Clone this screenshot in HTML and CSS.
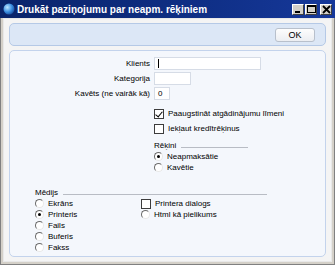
FILE: index.html
```html
<!DOCTYPE html>
<html>
<head>
<meta charset="utf-8">
<link rel="stylesheet" href="styles.css">
</head>
<body>
<div class="window">
  <div class="titlebar">
    <svg class="appicon" width="12" height="12" viewBox="0 0 12 12">
      <defs><radialGradient id="g" cx="0.35" cy="0.35" r="0.7"><stop offset="0" stop-color="#bfe6ff"/><stop offset="0.6" stop-color="#3a8ee0"/><stop offset="1" stop-color="#1a4fa0"/></radialGradient></defs>
      <circle cx="6" cy="6" r="5.5" fill="url(#g)"/>
    </svg>
    <span class="title">Drukāt paziņojumu par neapm. rēķiniem</span>
    <div class="tbtns">
      <span class="tbtn"><svg width="9" height="9" viewBox="0 0 9 9"><rect x="1" y="6" width="5" height="2" fill="#000"/></svg></span>
      <span class="tbtn"><svg width="9" height="9" viewBox="0 0 9 9"><rect x="0.5" y="0.5" width="8" height="7" fill="none" stroke="#000"/><rect x="0" y="0" width="9" height="2" fill="#000"/></svg></span>
      <span class="tbtn close"><svg width="9" height="9" viewBox="0 0 9 9"><path d="M1 1 L8 8 M8 1 L1 8" stroke="#000" stroke-width="1.8"/></svg></span>
    </div>
  </div>
  <div class="body">
    <div class="toolbar">
      <button class="okbtn">OK</button>
    </div>
    <div class="panel">
      <div class="fields">
        <label class="lbl">Klients</label><div class="inp w-long"><span class="caret"></span></div>
        <label class="lbl">Kategorija</label><div class="inp w-mid"></div>
        <label class="lbl">Kavēts (ne vairāk kā)</label><div class="inp w-short">0</div>
      </div>
      <div class="checks">
        <div class="opt"><span class="cb checked"></span>Paaugstināt atgādinājumu līmeni</div>
        <div class="opt"><span class="cb"></span>Iekļaut kredītrēķinus</div>
      </div>
      <div class="group rekini">
        <div class="ghead"><span>Rēķini</span><span class="gline"></span></div>
        <div class="opt"><span class="rb on"></span>Neapmaksātie</div>
        <div class="opt"><span class="rb"></span>Kavētie</div>
      </div>
      <div class="group medijs">
        <div class="ghead"><span>Mēdijs</span><span class="gline"></span></div>
        <div class="cols">
          <div class="col">
            <div class="opt"><span class="rb"></span>Ekrāns</div>
            <div class="opt"><span class="rb on"></span>Printeris</div>
            <div class="opt"><span class="rb"></span>Fails</div>
            <div class="opt"><span class="rb"></span>Buferis</div>
            <div class="opt"><span class="rb"></span>Fakss</div>
          </div>
          <div class="col">
            <div class="opt"><span class="cb"></span>Printera dialogs</div>
            <div class="opt"><span class="rb"></span>Html kā pielikums</div>
          </div>
        </div>
      </div>
    </div>
  </div>
</div>
</body>
</html>
```
FILE: styles.css
```css
* { box-sizing: border-box; }
html, body { margin: 0; padding: 0; }
body { width: 335px; height: 265px; overflow: hidden; font-family: "Liberation Sans", Arial, sans-serif; font-size: 8px; color: #000; background: #fff; }
.window { width: 335px; height: 265px; display: flex; flex-direction: column; background: #d4d0c8; border: 1px solid #808080; border-top: none; }
.titlebar { height: 18px; flex: none; display: flex; align-items: center; padding: 0 3px 0 3px; background: linear-gradient(to right, #0a246a, #0f2f86 60%, #16389a); color: #fff; margin: 0 -1px; }
.appicon { flex: none; margin-right: 2px; }
.title { font-weight: bold; font-size: 10px; flex: 1; white-space: nowrap; letter-spacing: 0; }
.tbtns { display: flex; gap: 1px; }
.tbtn { width: 12px; height: 11px; background: #d4d0c8; border: 1px solid; border-color: #fff #404040 #404040 #fff; display: flex; align-items: center; justify-content: center; }
.tbtn.close { margin-left: 2px; }
.body { flex: 1; margin: 0 2px 2px 2px; background: #f4f4f4; padding: 4px 5px 4px 5px; display: flex; flex-direction: column; gap: 4px; border: 1px solid #e8e8e8; }
.toolbar { height: 23px; flex: none; border: 1px solid #b5c9e6; border-radius: 5px; background: #dce7f6; display: flex; align-items: center; justify-content: flex-end; padding-right: 10px; }
.okbtn { width: 40px; height: 14px; padding: 0; font: 9px "Liberation Sans", Arial, sans-serif; color: #000; background: linear-gradient(#fdfdfd, #eceef2); border: 1px solid #b8c0cc; border-radius: 3px; }
.panel { flex: 1; border: 1px solid #c3d3ec; border-radius: 5px; background-color: #f4f7fc; background-image: radial-gradient(#e6ecf7 0.6px, transparent 0.7px); background-size: 2px 2px; padding: 6px 0 0 0; }
.fields { display: grid; grid-template-columns: 140px auto; column-gap: 4px; row-gap: 2px; align-items: center; justify-items: start; }
.lbl { justify-self: end; line-height: 12px; }
.inp { height: 13px; background: #fff; border: 1px solid #d6dce6; line-height: 11px; padding-left: 3px; }
.w-long { width: 107px; }
.w-mid { width: 37px; }
.w-short { width: 16px; }
.caret { display: inline-block; width: 1px; height: 9px; background: #000; margin-top: 1px; }
.checks { margin: 8px 0 0 144px; display: flex; flex-direction: column; gap: 4px; }
.opt { display: flex; align-items: center; height: 11px; white-space: nowrap; }
.cb { width: 10px; height: 10px; border: 1px solid #3c3c3c; background: #fff; margin-right: 4px; position: relative; flex: none; }
.cb.checked::after { content: ""; position: absolute; left: 2px; top: 0px; width: 3px; height: 6px; border: solid #000; border-width: 0 1.5px 1.5px 0; transform: rotate(40deg); }
.rb { width: 9px; height: 9px; border-radius: 50%; border: 1px solid #6b6b6b; border-color: #6b6b6b #e8e8e8 #e8e8e8 #6b6b6b; background: #fff; margin-right: 4px; position: relative; flex: none; }
.rb.on::after { content: ""; position: absolute; left: 2px; top: 2px; width: 3px; height: 3px; border-radius: 50%; background: #000; }
.group { display: flex; flex-direction: column; }
.ghead { display: flex; align-items: center; height: 11px; }
.gline { height: 1px; background: #b8bcc4; margin-left: 5px; margin-top: 4px; }
.rekini { margin: 6px 0 0 144px; width: 94px; gap: 0; }
.rekini .gline { flex: 1; }
.rekini .opt { height: 11px; }
.medijs { margin: 14px 0 0 25px; width: 232px; }
.medijs .gline { flex: 1; }
.cols { display: flex; }
.col { display: flex; flex-direction: column; }
.col:first-child { width: 106px; }
```
